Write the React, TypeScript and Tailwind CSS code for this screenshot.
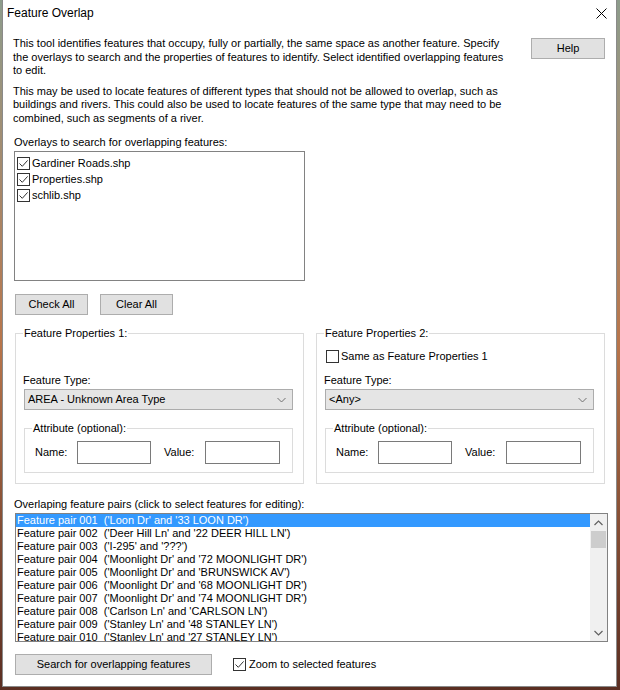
import React from 'react';
import { clsx } from 'clsx';

const pairs = [
  ["001", "('Loon Dr' and '33 LOON DR')"],
  ["002", "('Deer Hill Ln' and '22 DEER HILL LN')"],
  ["003", "('I-295' and '???')"],
  ["004", "('Moonlight Dr' and '72 MOONLIGHT DR')"],
  ["005", "('Moonlight Dr' and 'BRUNSWICK AV')"],
  ["006", "('Moonlight Dr' and '68 MOONLIGHT DR')"],
  ["007", "('Moonlight Dr' and '74 MOONLIGHT DR')"],
  ["008", "('Carlson Ln' and 'CARLSON LN')"],
  ["009", "('Stanley Ln' and '48 STANLEY LN')"],
  ["010", "('Stanley Ln' and '27 STANLEY LN')"],
];

function CheckBox({ checked }: { checked?: boolean }) {
  return (
    <span className="inline-flex w-[13px] h-[13px] shrink-0 items-center justify-center border border-[#333333] bg-white">
      {checked && (
        <svg width="11" height="11" viewBox="0 0 11 11">
          <path d="M1.5 5.5 L4.3 8.3 L9.6 2.4" fill="none" stroke="#333333" strokeWidth="1" />
        </svg>
      )}
    </span>
  );
}

function Button({ children, className }: { children: React.ReactNode; className?: string }) {
  return (
    <button className={clsx('h-[21px] border border-[#adadad] bg-[#e1e1e1] text-[11px] leading-none text-black', className)}>
      {children}
    </button>
  );
}

function GroupBox({ label, className, children }: { label: string; className?: string; children?: React.ReactNode }) {
  return (
    <div className={clsx('relative border border-[#dcdcdc]', className)}>
      <span className="absolute top-[-8px] left-[7px] bg-white px-px leading-[14px]">{label}</span>
      {children}
    </div>
  );
}

function Chevron({ up }: { up?: boolean }) {
  return (
    <svg width="9" height="6" viewBox="0 0 9 6">
      <path d={up ? 'M0.5 5 L4.5 1 L8.5 5' : 'M0.5 1 L4.5 5 L8.5 1'} fill="none" stroke="#606060" strokeWidth="1.2" />
    </svg>
  );
}

function Combo({ value, className }: { value: string; className?: string }) {
  return (
    <div className={clsx('flex h-[21px] items-center justify-between border border-[#acacac] bg-[#e5e5e5] pl-[3px] pr-[6px]', className)}>
      <span>{value}</span>
      <svg width="9" height="6" viewBox="0 0 9 6">
        <path d="M0.5 1 L4.5 5 L8.5 1" fill="none" stroke="#707070" strokeWidth="1" />
      </svg>
    </div>
  );
}

function FeatureProps({ label, combo, same, className }: { label: string; combo: string; same?: boolean; className?: string }) {
  return (
    <GroupBox label={label} className={clsx('h-[151px] pl-[7px] pr-[10px]', className)}>
      <div className="h-[29px] pt-[17px] flex items-start">
        {same && (
          <label className="flex items-center gap-[2px] ml-[2px] mt-[-1px] leading-[13px]">
            <CheckBox />
            <span>Same as Feature Properties 1</span>
          </label>
        )}
      </div>
      <div className="mt-[10px] leading-[14px]">Feature Type:</div>
      <Combo value={combo} className="mt-[2px] ml-px" />
      <GroupBox label="Attribute (optional):" className="mt-[18px] ml-px h-[45px] flex items-start pt-[12px] pl-[10px]">
        <span className="mt-[4px] w-[42px] leading-[14px]">Name:</span>
        <span className="w-[74px] h-[23px] border border-[#7a7a7a] bg-white" />
        <span className="mt-[4px] ml-[13px] w-[41px] leading-[14px]">Value:</span>
        <span className="w-[75px] h-[23px] border border-[#7a7a7a] bg-white" />
      </GroupBox>
    </GroupBox>
  );
}

export default function App() {
  return (
    <div className="w-[620px] h-[690px] overflow-hidden bg-gradient-to-b from-[#8d9c8c] via-[#b8754a] to-[#5a2e22] pl-[2px] font-['Liberation_Sans',Arial,sans-serif] text-[11px] text-black">
      <div className="w-[615px] h-[687px] bg-white border-x border-b border-[#8a8a8a] flex flex-col">
        {/* title bar */}
        <div className="h-[26px] flex items-center justify-between pl-[4px] pr-[9px]">
          <span className="text-[12px]">Feature Overlap</span>
          <svg width="11" height="11" viewBox="0 0 11 11">
            <path d="M0.5 0.5 L10.5 10.5 M10.5 0.5 L0.5 10.5" stroke="#000" strokeWidth="1" />
          </svg>
        </div>

        <div className="pl-[10px] pr-[11px] flex flex-col">
          {/* intro */}
          <div className="mt-[11px] flex items-start">
            <div className="leading-[13.5px]">
              <p>
                This tool identifies features that occupy, fully or partially, the same space as another feature. Specify<br />
                the overlays to search and the properties of features to identify. Select identified overlapping features<br />
                to edit.
              </p>
              <p className="mt-[7px]">
                This may be used to locate features of different types that should not be allowed to overlap, such as<br />
                buildings and rivers. This could also be used to locate features of the same type that may need to be<br />
                combined, such as segments of a river.
              </p>
            </div>
            <Button className="ml-auto mt-px w-[74px] shrink-0">Help</Button>
          </div>

          {/* overlays */}
          <div className="mt-[10px] leading-[14px] pl-px">Overlays to search for overlapping features:</div>
          <div className="mt-[2px] ml-px w-[291px] h-[130px] border border-[#828282] pt-[3px] pl-[2px]">
            {['Gardiner Roads.shp', 'Properties.shp', 'schlib.shp'].map(name => (
              <div key={name} className="h-[16px] flex items-center gap-[2px]">
                <CheckBox checked />
                <span>{name}</span>
              </div>
            ))}
          </div>
          <div className="mt-[13px] ml-[2px] flex gap-[12px]">
            <Button className="w-[73px]">Check All</Button>
            <Button className="w-[73px]">Clear All</Button>
          </div>

          {/* feature properties */}
          <div className="mt-[18px] ml-[2px] flex gap-[12px]">
            <FeatureProps label="Feature Properties 1:" combo="AREA - Unknown Area Type" className="w-[290px]" />
            <FeatureProps label="Feature Properties 2:" combo="<Any>" same className="w-[290px]" />
          </div>

          {/* pairs */}
          <div className="mt-[13px] leading-[14px] pl-px">Overlaping feature pairs (click to select features for editing):</div>
          <div className="mt-[2px] ml-[2px] w-[593px] h-[129px] border border-[#828282] flex">
            <div className="flex-1 overflow-hidden">
              {pairs.map(([n, desc], i) => (
                <div
                  key={n}
                  className={clsx(
                    'h-[13px] leading-[13px] pl-px whitespace-pre',
                    i === 0 && 'bg-[#3399ff] text-white',
                  )}
                >
                  {`Feature pair ${n}  ${desc}`}
                </div>
              ))}
            </div>
            <div className="w-[17px] bg-[#f0f0f0] flex flex-col items-center">
              <div className="h-[17px] flex items-center justify-center"><Chevron up /></div>
              <div className="w-[15px] h-[17px] bg-[#cdcdcd]" />
              <div className="mt-auto h-[17px] flex items-center justify-center"><Chevron /></div>
            </div>
          </div>

          <div className="mt-[12px] ml-[2px] flex items-center">
            <Button className="w-[197px]">Search for overlapping features</Button>
            <label className="ml-[21px] flex items-center gap-[3px]">
              <CheckBox checked />
              <span>Zoom to selected features</span>
            </label>
          </div>
        </div>
      </div>
    </div>
  );
}
